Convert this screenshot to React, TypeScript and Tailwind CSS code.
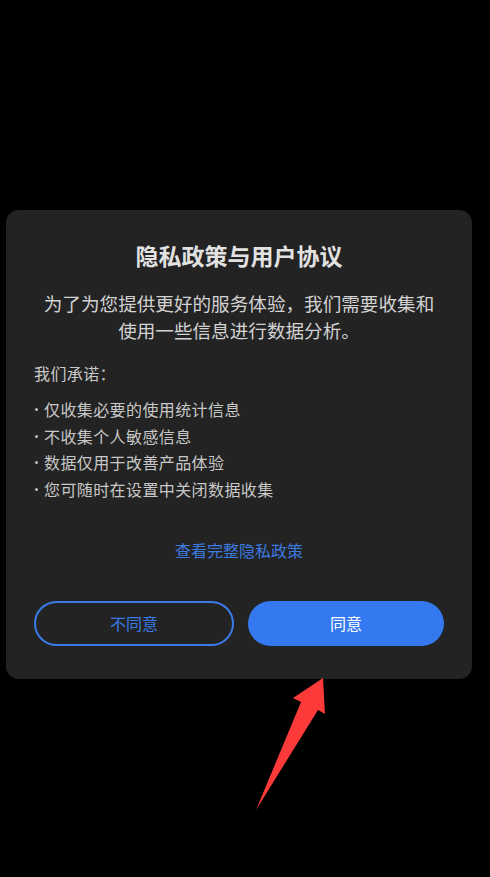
import React from 'react';

const promises = ['仅收集必要的使用统计信息', '不收集个人敏感信息', '数据仅用于改善产品体验', '您可随时在设置中关闭数据收集'];

export default function App() {
  return (
    <div
      className="relative min-h-[877px] w-full bg-black px-[6px] pt-[210px]"
      style={{ fontFamily: '"Noto Sans CJK SC", "Noto Sans", sans-serif' }}
    >
      <div className="w-[466px] rounded-[13px] bg-[#232323] px-[28px] pb-[33px] pt-[29px]">
        <h1 className="text-center text-[23px] font-bold leading-[32px] text-[#e2e2e2]">隐私政策与用户协议</h1>
        <p className="mt-[18px] text-center text-[18.6px] leading-[27px] text-[#d2d2d2]">
          为了为您提供更好的服务体验，我们需要收集和
          <br />
          使用一些信息进行数据分析。
        </p>

        <p className="mt-[17px] text-[16px] leading-[27px] tracking-[0.4px] text-[#c8c8c8]">我们承诺：</p>
        <ul className="mt-[9px] flex flex-col">
          {promises.map((item) => (
            <li key={item} className="flex items-center text-[16px] leading-[26.7px] tracking-[0.4px] text-[#c8c8c8]">
              <span className="mr-[6px] ml-[1px] h-[3px] w-[3px] rounded-full bg-[#bdbdbd]" />
              {item}
            </li>
          ))}
        </ul>

        <div className="mt-[35px] text-center">
          <a href="#" className="text-[16px] leading-[24px] text-[#3c7ae0]">查看完整隐私政策</a>
        </div>

        <div className="mt-[39px] flex gap-[14px]">
          <button className="flex h-[45px] flex-1 items-center justify-center rounded-full border-2 border-[#3a7ae8] text-[16px] text-[#3a7ae8]">
            不同意
          </button>
          <button className="flex h-[45px] flex-1 items-center justify-center rounded-full bg-[#3479f0] text-[16px] text-white">
            同意
          </button>
        </div>
      </div>

      <svg className="absolute left-0 top-0" width="490" height="877" viewBox="0 0 490 877">
        <polygon points="323,678 325,714 318,710 256,810 301,702 293,698" fill="#fd3a3a" />
      </svg>
    </div>
  );
}
